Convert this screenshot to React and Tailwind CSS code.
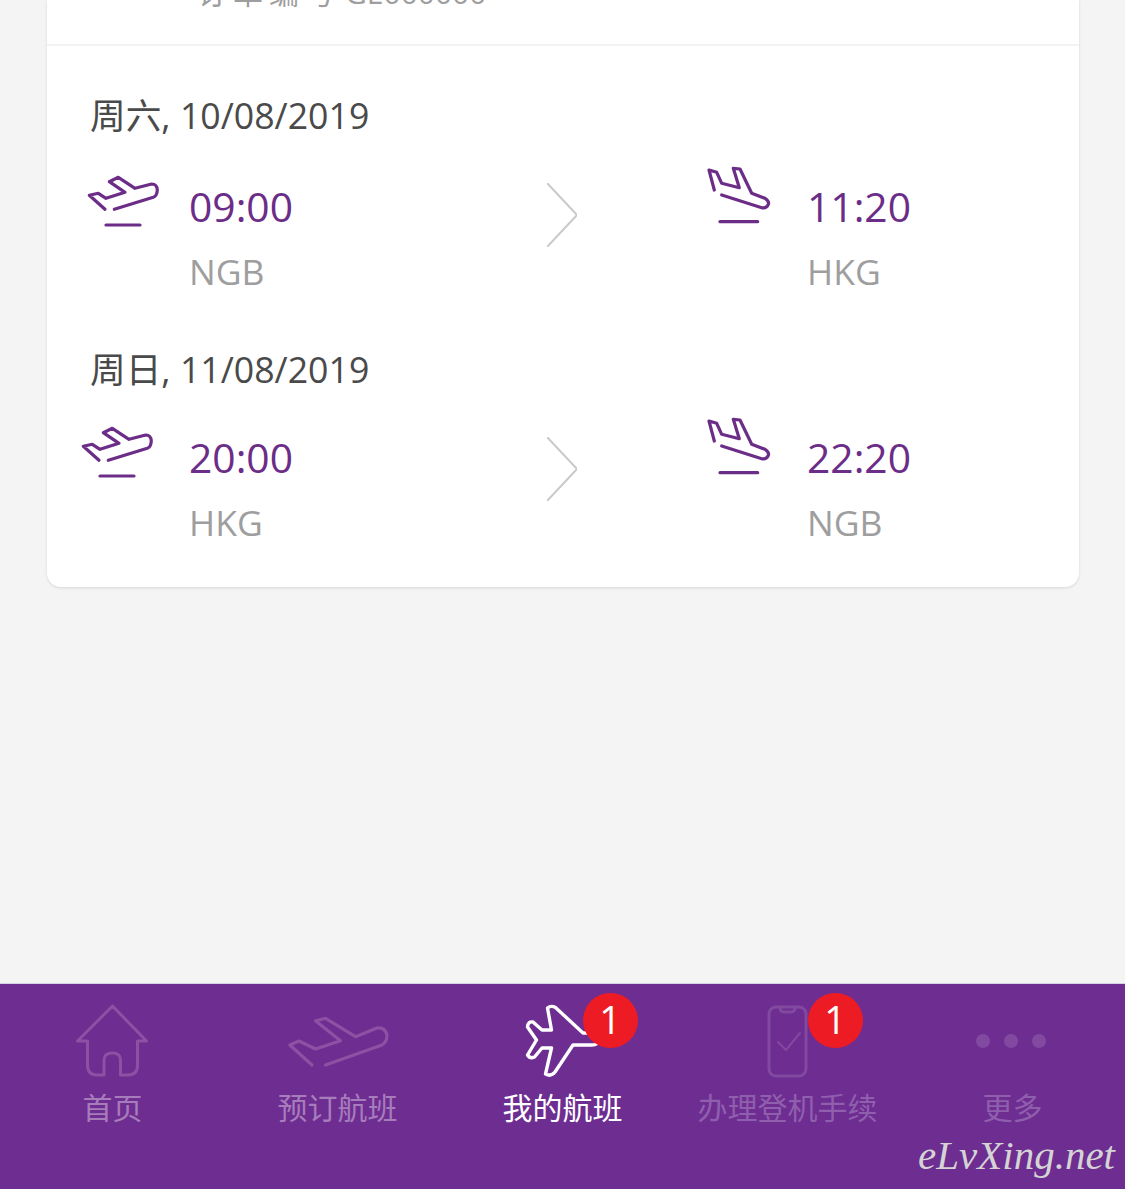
const SANS = 'font-["Open_Sans","Noto_Sans_CJK_SC",sans-serif]';

// Drawn from the reference, one viewBox unit = one pixel
const TakeoffIcon = ({ nudge = '' }) => (
    <svg viewBox="0 0 110 80" className={`w-[110px] h-[80px] shrink-0 ${nudge}`} fill="none" stroke="#6b2d87" strokeWidth="3.2" strokeLinecap="round" strokeLinejoin="round">
        <path d="M35 49.3 19.3 35.3 28.3 33.3 36 38.3 55 32.3 39.3 21.7 48.3 17.3 65 28.3 81.7 24Q87 24 87.3 30 87 36 83.3 37.3L44.3 49.3" />
        <path d="M36 65H70" />
    </svg>
);

const LandingIcon = () => (
    <svg viewBox="0 0 90 80" className="w-[90px] h-[80px] shrink-0 -mt-[5px]" fill="none" stroke="#6b2d87" strokeWidth="3.2" strokeLinecap="round" strokeLinejoin="round">
        <path d="M19.3 35 14 15 21.7 17.3 26.7 28.3 44.3 32.7 38.3 13.3 45 14 56.7 38.3 70 43.3Q75 47 73 50 71 54 66 52.5L26.7 40" />
        <path d="M25 66.7H62.7" />
    </svg>
);

const Chevron = ({ nudge }) => (
    <svg viewBox="0 0 30 64" className={`w-[30px] h-[64px] shrink-0 ${nudge}`} fill="none" stroke="#c9c9c9" strokeWidth="2">
        <path d="M0 0 30 32 0 64" />
    </svg>
);

const Stop = ({ time, code }) => (
    <div className="pt-[26px]">
        <div className="text-[40.8px] leading-[40px] text-[#6b2d87]">{time}</div>
        <div className="mt-[25px] text-[35.5px] leading-[40px] text-[#9e9e9e]">{code}</div>
    </div>
);

const FlightLeg = ({ date, from, to, iconNudge, dateGap, chevronNudge }) => (
    <div>
        <div className={`text-[35.7px] leading-[44px] text-[#4a4a4a] pl-[43px] ${dateGap}`}>{date}</div>
        <div className="flex items-start pl-[23px]">
            <TakeoffIcon nudge={iconNudge} />
            <div className="w-[358px] ml-[9px]">
                <Stop {...from} />
            </div>
            <Chevron nudge={chevronNudge} />
            <div className="ml-[118px] flex items-start">
                <LandingIcon />
                <div className="ml-[22px]">
                    <Stop {...to} />
                </div>
            </div>
        </div>
    </div>
);

const BookingCard = () => (
    <div className="mx-[47px] w-[1032px] bg-white rounded-b-[14px] shadow-[0_1px_3px_rgba(0,0,0,0.12)]">
        <div className="h-[44px] overflow-hidden relative">
            <div className="absolute left-[150px] top-[-29px] text-[30px] leading-[44px] text-[#9e9e9e] whitespace-nowrap">
                <span className="tracking-[6px]">订单编号</span>
                <span className="ml-[4px]">GE000000</span>
            </div>
        </div>
        <div className="h-[2px] bg-[#f3f3f3]" />
        <div className="pt-[47px] pb-[45px]">
            <FlightLeg
                date="周六, 10/08/2019"
                from={{ time: '09:00', code: 'NGB' }}
                to={{ time: '11:20', code: 'HKG' }}
                dateGap="mb-[23px]"
                chevronNudge="mt-[23px]"
            />
            <div className="h-[56px]" />
            <FlightLeg
                date="周日, 11/08/2019"
                from={{ time: '20:00', code: 'HKG' }}
                to={{ time: '22:20', code: 'NGB' }}
                iconNudge="-ml-[6px] mr-[6px]"
                dateGap="mb-[20px]"
                chevronNudge="mt-[26px]"
            />
        </div>
    </div>
);

const HomeIcon = () => (
    <svg viewBox="0 0 90 80" className="w-[90px] h-[80px] shrink-0" fill="none" stroke="#8c51a3" strokeWidth="3" strokeLinejoin="round">
        <path d="M19.5 41H9.5L44.5 6 78.5 41H69.5V65Q69.5 75 60 75H52.5V60Q52.5 53 44.5 53 36 53 36 60V75H29Q19.5 75 19.5 65Z" />
    </svg>
);

const BookIcon = () => (
    <svg viewBox="0 0 110 80" className="w-[110px] h-[80px] shrink-0" fill="none" stroke="#8c51a3" strokeWidth="3.2" strokeLinecap="round" strokeLinejoin="round">
        <path d="M29 65 6.8 45 16 41 32.5 49 57.5 40.7 32.5 20.7 42.5 18.3 72.5 36.7 94 28Q102 27 104 35 104 42 99 45L42.5 65" />
    </svg>
);

const MyFlightIcon = () => (
    <svg viewBox="0 0 90 80" className="w-[90px] h-[80px] shrink-0" fill="none" stroke="#ffffff" strokeWidth="3.4" strokeLinejoin="round">
        <path d="M29.5 8Q33 5 37.5 7.5L65 33H74Q81 34 81 40 80 45 74 45H55L37 72Q33 77 27.500 74L33.500 48H24L16.500 57Q12 59 9.500 55L18.500 40 9.500 27Q10 21 15 22L24 30H33.500Z" />
    </svg>
);

const PhoneCheckIcon = () => (
    <svg viewBox="0 0 90 80" className="w-[90px] h-[80px] shrink-0" fill="none" stroke="#8249a0" strokeWidth="3" strokeLinecap="round" strokeLinejoin="round">
        <rect x="26" y="7" width="37" height="69" rx="7" />
        <path d="M37 7Q37 12 41 12H48Q52 12 52 7" />
        <path d="M35 42 43 50 57 33" strokeWidth="2" />
    </svg>
);

const DotsIcon = () => (
    <div className="h-[80px] pt-[2px] pr-[4px] flex items-center justify-center gap-[14px]">
        <span className="w-[14px] h-[14px] rounded-full bg-[#8249a0]" />
        <span className="w-[14px] h-[14px] rounded-full bg-[#8249a0]" />
        <span className="w-[14px] h-[14px] rounded-full bg-[#8249a0]" />
    </div>
);

const Badge = () => (
    <span className="absolute left-[65px] top-[-7px] w-[55px] h-[55px] rounded-full bg-[#ed1c24] text-white text-[38px] leading-[52px] text-center">
        1
    </span>
);

const TABS = [
    { label: '首页', icon: HomeIcon, text: 'text-[#a77cbb]' },
    { label: '预订航班', icon: BookIcon, text: 'text-[#a77cbb]' },
    { label: '我的航班', icon: MyFlightIcon, text: 'text-white', badge: true },
    { label: '办理登机手续', icon: PhoneCheckIcon, text: 'text-[#8f5fae]', badge: true },
    { label: '更多', icon: DotsIcon, text: 'text-[#8f5fae]' },
];

const BottomNav = () => (
    <div className="relative h-[206px] bg-[#6d2d91] border-t border-[#d8d0e4] grid grid-cols-5">
        {TABS.map((tab) => {
            const Icon = tab.icon;
            return (
                <div key={tab.label} className="flex flex-col items-center pt-[16px]">
                    <div className="relative w-[90px] h-[80px] flex items-center justify-center">
                        <Icon />
                        {tab.badge && <Badge />}
                    </div>
                    <span className={`mt-[8px] text-[30px] leading-[40px] whitespace-nowrap ${tab.text}`}>{tab.label}</span>
                </div>
            );
        })}
        <span className='absolute right-[10px] top-[146px] font-["Liberation_Serif",serif] italic text-[41px] leading-[50px] text-[#d4d4d4] whitespace-nowrap'>
            eLvXing.net
        </span>
    </div>
);

export default function App() {
    return (
        <div className={`w-[1125px] h-[1189px] overflow-hidden bg-[#f4f4f4] flex flex-col ${SANS}`}>
            <BookingCard />
            <div className="flex-1" />
            <BottomNav />
        </div>
    );
}
